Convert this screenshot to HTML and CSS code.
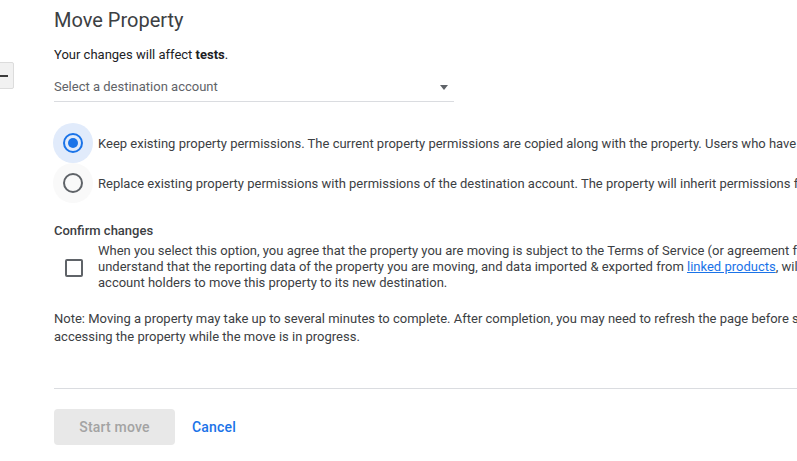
FILE: index.html
```html
<!DOCTYPE html>
<html>
<head>
<meta charset="utf-8">
<link rel="stylesheet" href="styles.css">
</head>
<body>
<div class="page">
  <div class="left">
    <div class="collapse-btn"><span class="dash"></span></div>
  </div>
  <main class="main">
    <h1 class="title">Move Property</h1>
    <p class="affect">Your changes will affect <b>tests</b>.</p>
    <div class="select">
      <span class="select-label">Select a destination account</span>
      <span class="select-arrow"></span>
    </div>
    <div class="radios">
      <label class="radio-row">
        <span class="radio-hit checked"><span class="radio checked"></span></span>
        <span class="radio-text">Keep existing property permissions. The current property permissions are copied along with the property. Users who have access to the property retain their access.</span>
      </label>
      <label class="radio-row">
        <span class="radio-hit hover"><span class="radio"></span></span>
        <span class="radio-text">Replace existing property permissions with permissions of the destination account. The property will inherit permissions from the destination account.</span>
      </label>
    </div>
    <h2 class="confirm-title">Confirm changes</h2>
    <div class="confirm-row">
      <span class="check-wrap"><span class="checkbox"></span></span>
      <p class="confirm-text">When you select this option, you agree that the property you are moving is subject to the Terms of Service (or agreement for non-Google Analytics properties) of the destination account. You<br>understand that the reporting data of the property you are moving, and data imported &amp; exported from <a href="#" class="link">linked products</a>, will be accessible to destination<br>account holders to move this property to its new destination.</p>
    </div>
    <p class="note">Note: Moving a property may take up to several minutes to complete. After completion, you may need to refresh the page before seeing the property in its new account. Users may have trouble<br>accessing the property while the move is in progress.</p>
    <div class="divider"></div>
    <div class="actions">
      <button class="btn-start" disabled>Start move</button>
      <button class="btn-cancel">Cancel</button>
    </div>
  </main>
</div>
</body>
</html>
```

FILE: styles.css
```css
* { box-sizing: border-box; }
html, body { margin: 0; padding: 0; }
body {
  width: 797px;
  height: 461px;
  overflow: hidden;
  background: #fff;
  font-family: Roboto, "Liberation Sans", Arial, sans-serif;
  color: #3c4043;
}
.page {
  display: flex;
  width: 1400px;
}
.left {
  width: 54px;
  flex: none;
  padding-top: 62px;
}
.collapse-btn {
  width: 30px;
  height: 27px;
  margin-left: -16px;
  background: #f1f1f1;
  border: 1px solid #dcdcdc;
  border-radius: 2px;
  display: flex;
  align-items: center;
  padding-left: 9px;
}
.dash {
  width: 14px;
  height: 2px;
  background: #3c3c3c;
}
.main {
  flex: none;
  width: 1300px;
  padding-top: 8px;
}
.title {
  margin: 0;
  font-size: 20px;
  line-height: 24px;
  font-weight: 400;
  color: #3c4043;
}
.affect {
  margin: 13px 0 0;
  font-size: 13px;
  line-height: 20px;
  color: #202124;
}
.affect b { font-weight: 700; }
.select {
  width: 400px;
  height: 37px;
  border-bottom: 1px solid #dadce0;
  display: flex;
  align-items: center;
  justify-content: space-between;
  padding-top: 6px;
  padding-right: 6px;
}
.select-label {
  font-size: 13px;
  color: #5f6368;
}
.select-arrow {
  width: 0;
  height: 0;
  border-left: 4.5px solid transparent;
  border-right: 4.5px solid transparent;
  border-top: 5px solid #5f6368;
  margin-top: 2px;
}
.radios {
  margin-top: 21px;
  display: flex;
  flex-direction: column;
}
.radio-row {
  display: flex;
  align-items: center;
  height: 40px;
  white-space: nowrap;
}
.radio-hit {
  width: 40px;
  height: 40px;
  border-radius: 50%;
  margin-left: -1px;
  display: flex;
  align-items: center;
  justify-content: center;
  flex: none;
}
.radio-hit.checked { background: #e1ebfb; }
.radio-hit.hover { background: #f9f9f9; }
.radio {
  width: 20px;
  height: 20px;
  border: 2px solid #5f6368;
  border-radius: 50%;
  display: flex;
  align-items: center;
  justify-content: center;
}
.radio.checked { border-color: #1a73e8; }
.radio.checked::after {
  content: "";
  width: 10px;
  height: 10px;
  border-radius: 50%;
  background: #1a73e8;
}
.radio-text {
  margin-left: 5px;
  font-size: 13px;
  color: #3c4043;
}
.confirm-title {
  margin: 20px 0 0;
  font-size: 13px;
  line-height: 16px;
  font-weight: 500;
  color: #3c4043;
}
.confirm-row {
  display: flex;
  align-items: center;
  margin-top: 4px;
}
.check-wrap {
  width: 44px;
  flex: none;
  display: flex;
  padding-left: 11px;
  padding-top: 2px;
}
.checkbox {
  width: 18px;
  height: 18px;
  border: 2px solid #5f6368;
  border-radius: 2px;
}
.confirm-text {
  margin: 0;
  font-size: 13px;
  line-height: 16px;
  white-space: nowrap;
  color: #3c4043;
}
.link { color: #1a73e8; text-decoration: underline; }
.note {
  margin: 19px 0 0;
  font-size: 13px;
  line-height: 18px;
  white-space: nowrap;
  color: #3c4043;
}
.divider {
  margin-top: 42px;
  height: 1px;
  background: #dadce0;
}
.actions {
  display: flex;
  align-items: center;
  gap: 17px;
  margin-top: 20px;
}
.btn-start {
  width: 121px;
  height: 36px;
  border: none;
  border-radius: 4px;
  background: #e8e8e8;
  color: #a3a3a3;
  font-family: inherit;
  font-size: 14px;
  font-weight: 500;
  letter-spacing: 0.2px;
}
.btn-cancel {
  border: none;
  background: none;
  padding: 0;
  color: #1a73e8;
  font-family: inherit;
  font-size: 14px;
  font-weight: 500;
  letter-spacing: 0.2px;
}
```
